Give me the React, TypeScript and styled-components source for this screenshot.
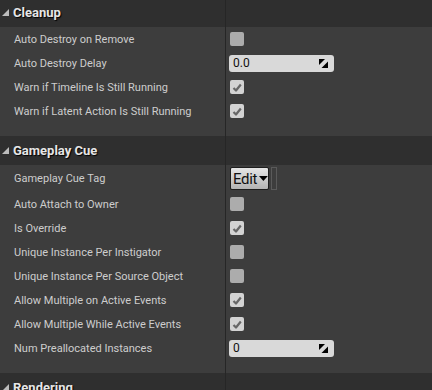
import styled, { createGlobalStyle } from 'styled-components';

type RowProps = {
	$height?: number;
};

type CheckProps = {
	$checked: boolean;
};

type Prop =
	| { label: string; kind: 'check'; checked: boolean }
	| { label: string; kind: 'number'; value: string }
	| { label: string; kind: 'tag' };

type Section = {
	title: string;
	props: Prop[];
};

const GlobalStyle = createGlobalStyle`
	html, body {
		margin: 0;
		padding: 0;
		background: #3d3d3d;
	}
	body {
		font-family: Roboto, 'Liberation Sans', sans-serif;
	}
`;

const Panel = styled.div`
	width: 432px;
	height: 390px;
	overflow: hidden;
	background: #3d3d3d;
`;

const List = styled.div`
	display: flex;
	flex-direction: column;
	margin-top: -2px;
`;

const Header = styled.div`
	display: flex;
	height: 29px;
	flex-shrink: 0;
	background: #2f2f2f;
`;

const HeaderTitle = styled.div`
	width: 226px;
	box-sizing: border-box;
	border-right: 1px solid #262626;
	display: flex;
	align-items: center;
	gap: 4px;
	padding-left: 2px;
	color: #e6e6e6;
	font-size: 13px;
	font-weight: 700;
	text-shadow: 1px 1px 1px #000;
`;

const Row = styled.div<RowProps>`
	display: flex;
	height: ${(props) => props.$height ?? 24}px;
	flex-shrink: 0;
`;

const NameCell = styled.div`
	width: 226px;
	box-sizing: border-box;
	border-right: 1px solid #262626;
	display: flex;
	align-items: center;
	padding-left: 14px;
	color: #cdcdcd;
	font-size: 11px;
	white-space: nowrap;
`;

const ValueCell = styled.div`
	flex: 1;
	display: flex;
	align-items: center;
	padding-left: 4px;
`;

const CheckBox = styled.div<CheckProps>`
	width: 14px;
	height: 14px;
	border-radius: 2px;
	background: ${(props) => (props.$checked ? '#d3d3d3' : '#acacac')};
	display: flex;
	align-items: center;
	justify-content: center;
`;

const NumberBox = styled.div`
	width: 105px;
	height: 17px;
	margin-left: -1px;
	box-sizing: border-box;
	border-radius: 3px;
	background: #d9d9d9;
	display: flex;
	align-items: center;
	justify-content: space-between;
	padding: 0 6px 0 4px;
	color: #111;
	font-size: 12px;
`;

const TagGroup = styled.div`
	display: flex;
	align-items: center;
	gap: 2px;
`;

const EditButton = styled.div`
	height: 23px;
	width: 39px;
	box-sizing: border-box;
	border: 1px solid #1e1e1e;
	border-radius: 2px;
	background: linear-gradient(#e6e6e6, #b3b3b3);
	display: flex;
	align-items: center;
	gap: 2px;
	padding-left: 2px;
	color: #111;
	font-family: 'Liberation Sans Narrow', Roboto, sans-serif;
	font-size: 15px;
	letter-spacing: -0.3px;
`;

const TagSlot = styled.div`
	width: 6px;
	height: 23px;
	box-sizing: border-box;
	border: 1px solid #5a5a5a;
`;

const sections: Section[] = [
	{
		title: 'Cleanup',
		props: [
			{ label: 'Auto Destroy on Remove', kind: 'check', checked: false },
			{ label: 'Auto Destroy Delay', kind: 'number', value: '0.0' },
			{ label: 'Warn if Timeline Is Still Running', kind: 'check', checked: true },
			{ label: 'Warn if Latent Action Is Still Running', kind: 'check', checked: true }
		]
	},
	{
		title: 'Gameplay Cue',
		props: [
			{ label: 'Gameplay Cue Tag', kind: 'tag' },
			{ label: 'Auto Attach to Owner', kind: 'check', checked: false },
			{ label: 'Is Override', kind: 'check', checked: true },
			{ label: 'Unique Instance Per Instigator', kind: 'check', checked: false },
			{ label: 'Unique Instance Per Source Object', kind: 'check', checked: false },
			{ label: 'Allow Multiple on Active Events', kind: 'check', checked: true },
			{ label: 'Allow Multiple While Active Events', kind: 'check', checked: true },
			{ label: 'Num Preallocated Instances', kind: 'number', value: '0' }
		]
	},
	{
		title: 'Rendering',
		props: []
	}
];

const Expander = () => (
	<svg width="7" height="7" viewBox="0 0 7 7">
		<polygon points="7,0 7,7 0,7" fill="#bcbcbc" />
	</svg>
);

const Tick = () => (
	<svg width="10" height="9" viewBox="0 0 10 9">
		<path d="M1.5 5 L4 7.5 L8.8 1.5" fill="none" stroke="#676767" strokeWidth="2.2" strokeLinejoin="round" />
	</svg>
);

// spin handle: two black corners split by a light diagonal
const SpinIcon = () => (
	<svg width="9" height="9" viewBox="0 0 9 9">
		<polygon points="0,0 6,0 0,6" fill="#000" />
		<polygon points="9,2.5 9,9 2.5,9" fill="#000" />
	</svg>
);

const DownArrow = () => (
	<svg width="9" height="5" viewBox="0 0 9 5">
		<polygon points="0,0 9,0 4.5,5" fill="#000" />
	</svg>
);

const renderValue = (prop: Prop) => {
	if (prop.kind === 'check') {
		return <CheckBox $checked={prop.checked}>{prop.checked && <Tick />}</CheckBox>;
	}
	if (prop.kind === 'number') {
		return (
			<NumberBox>
				{prop.value}
				<SpinIcon />
			</NumberBox>
		);
	}
	return (
		<TagGroup>
			<EditButton>
				Edit
				<DownArrow />
			</EditButton>
			<TagSlot />
		</TagGroup>
	);
};

const App = () => {
	return (
		<Panel>
			<GlobalStyle />
			<List>
				{sections.map((section) => (
					<div key={section.title}>
						<Header>
							<HeaderTitle>
								<Expander />
								{section.title}
							</HeaderTitle>
						</Header>
						{section.props.map((prop) => (
							<Row key={prop.label} $height={prop.kind === 'tag' ? 27 : 24}>
								<NameCell>{prop.label}</NameCell>
								<ValueCell>{renderValue(prop)}</ValueCell>
							</Row>
						))}
						{section.props.length > 0 && (
							<Row $height={13}>
								<NameCell />
								<ValueCell />
							</Row>
						)}
					</div>
				))}
			</List>
		</Panel>
	);
};

export default App;
